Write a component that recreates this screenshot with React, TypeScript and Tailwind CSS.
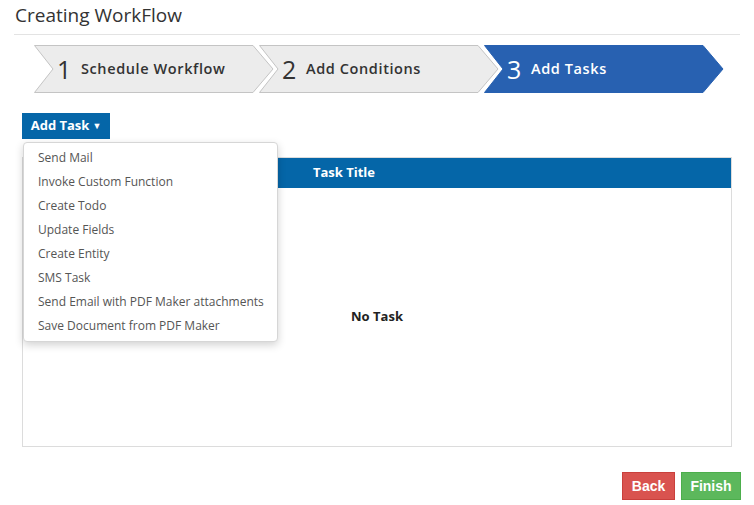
import React from "react";

const steps = [
  { n: "1", label: "Schedule Workflow", active: false },
  { n: "2", label: "Add Conditions", active: false },
  { n: "3", label: "Add Tasks", active: true },
];

const items = [
  "Send Mail",
  "Invoke Custom Function",
  "Create Todo",
  "Update Fields",
  "Create Entity",
  "SMS Task",
  "Send Email with PDF Maker attachments",
  "Save Document from PDF Maker",
];

function Step({ n, label, active, first }: { n: string; label: string; active: boolean; first: boolean }) {
  const pts = "0.5,0.5 219,0.5 239,24 219,47.5 0.5,47.5 19,24";
  return (
    <div className={`relative h-[48px] w-[240px] flex items-center ${first ? "" : "-ml-[15px]"}`}>
      <svg className="absolute inset-0 overflow-visible" width="240" height="48" viewBox="0 0 240 48">
        <polygon points={pts} fill="#ffffff" stroke="#ffffff" strokeWidth="6" strokeLinejoin="miter" />
        <polygon
          points={pts}
          fill={active ? "#2861b1" : "#ececec"}
          stroke={active ? "#2861b1" : "#c4c4c4"}
          strokeWidth="1"
        />
      </svg>
      <div className={`relative flex items-center pl-[23px] ${active ? "text-white" : "text-[#333]"}`}>
        <span className="text-[25px] font-normal leading-none w-[24px]">{n}</span>
        <span className="text-[14.5px] font-semibold tracking-[0.6px]">{label}</span>
      </div>
    </div>
  );
}

export default function App() {
  return (
    <div className="w-[754px] h-[505px] bg-white px-[14px] relative" style={{ fontFamily: '"Open Sans", "Noto Sans", sans-serif' }}>
      <div className="pt-[2px] pl-[1px] text-[19px] leading-[26px] text-[#333]">Creating WorkFlow</div>
      <div className="mt-[6px] border-t border-[#e3e3e3]" />
      <div className="mt-[10px] ml-[20px] flex">
        {steps.map((s, i) => (
          <Step key={s.n} {...s} first={i === 0} />
        ))}
      </div>
      <div className="relative mt-[20px] ml-[8px]">
        <button className="h-[26px] w-[88px] bg-[#0566a8] text-white text-[13px] font-bold flex items-center justify-center gap-[3px]">
          Add Task <span className="text-[9px]">▼</span>
        </button>
        <div className="absolute left-[1px] top-[29px] z-10 w-[255px] bg-white border border-[#d6d6d6] rounded-[4px] shadow-[0_3px_8px_rgba(0,0,0,0.18)] py-[3px]">
          {items.map((t) => (
            <div key={t} className="h-[24px] flex items-center pl-[14px] text-[12px] text-[#555]">
              {t}
            </div>
          ))}
        </div>
      </div>
      <div className="mt-[18px] mx-[8px] border border-[#dcdcdc] h-[290px] flex flex-col">
        <div className="h-[30px] bg-[#0566a8] flex text-white text-[13px] font-bold">
          <div className="w-[642px] flex items-center justify-center">Task Title</div>
          <div className="flex-1" />
        </div>
        <div className="flex-1 flex items-center justify-center text-[13px] font-bold text-[#222]">No Task</div>
      </div>
      <div className="mt-[25px] flex justify-end gap-[6px] -mr-[1px]" style={{ fontFamily: '"Liberation Sans", Arial, sans-serif' }}>
        <button className="h-[28px] w-[53px] bg-[#d9534f] border border-[#c9403c] text-white text-[14px] font-bold">Back</button>
        <button className="h-[28px] w-[60px] bg-[#5cb85c] border border-[#4cae4c] text-white text-[14px] font-bold">Finish</button>
      </div>
    </div>
  );
}
